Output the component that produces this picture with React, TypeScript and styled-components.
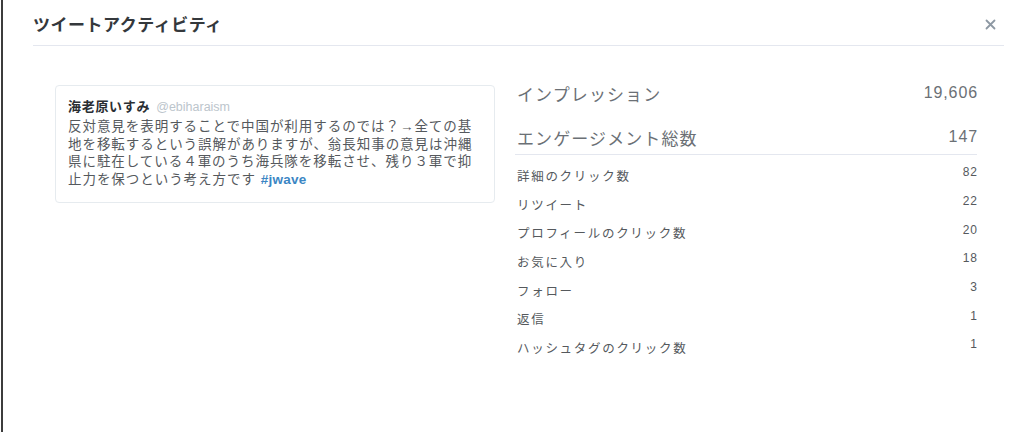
import React from "react";
import styled, { createGlobalStyle } from "styled-components";

const GlobalStyle = createGlobalStyle`
  html, body {
    margin: 0;
    padding: 0;
    background: #ffffff;
  }
  body {
    font-family: "Liberation Sans", "Noto Sans CJK JP", sans-serif;
    color: #292f33;
  }
`;

const Frame = styled.div`
  box-sizing: border-box;
  height: 432px;
  width: 1024px;
  margin-left: 1px;
  border-left: 2px solid #3c3c3c;
  overflow: hidden;
`;

const Header = styled.header`
  display: flex;
  align-items: center;
  justify-content: space-between;
  height: 45px;
  margin: 0 21px 0 30px;
  border-bottom: 1px solid #e4e7ef;
`;

const Title = styled.h2`
  margin: 0;
  padding-top: 7px;
  font-size: 17px;
  line-height: 22px;
  font-weight: 700;
  letter-spacing: 0.5px;
  color: #34383c;
`;

const CloseButton = styled.button`
  display: flex;
  align-items: center;
  justify-content: center;
  width: 20px;
  height: 20px;
  margin: 3px 4px 0 0;
  padding: 0;
  border: none;
  background: transparent;
  cursor: pointer;
`;

const Body = styled.div`
  display: flex;
  align-items: flex-start;
  padding: 39px 0 0 52px;
`;

const TweetCard = styled.article`
  box-sizing: border-box;
  width: 440px;
  padding: 12px 12px 13px 12px;
  border: 1px solid #e6ebef;
  border-radius: 4px;
`;

const AuthorLine = styled.div`
  display: flex;
  align-items: baseline;
  gap: 6px;
  line-height: 18px;
`;

const AuthorName = styled.span`
  font-size: 13px;
  font-weight: 700;
  letter-spacing: 0.7px;
  color: #2a2e33;
`;

const Handle = styled.span`
  font-size: 12.5px;
  color: #bcc5cc;
`;

const TweetText = styled.p`
  margin: 2px 0 0;
  font-size: 13.5px;
  line-height: 17.7px;
  letter-spacing: 0.95px;
  color: #55595d;
`;

const TweetLine = styled.span`
  display: flex;
  align-items: baseline;
  gap: 5px;
  white-space: nowrap;
`;

const Hashtag = styled.span`
  font-size: 13.5px;
  font-weight: 700;
  letter-spacing: 0.2px;
  color: #3b86c4;
`;

const Stats = styled.section`
  width: 462px;
  margin-left: 20px;
  margin-top: -5px;
`;

const Summary = styled.div`
  display: flex;
  flex-direction: column;
  gap: 18px;
  padding-bottom: 4px;
  border-bottom: 1px solid #e4e7ef;
`;

const BigRow = styled.div`
  display: flex;
  justify-content: space-between;
  align-items: center;
  height: 26px;
`;

const BigLabel = styled.span`
  padding-left: 2px;
  font-size: 17px;
  letter-spacing: 1.1px;
  color: #6b7075;
`;

const BigValue = styled.span`
  font-size: 16px;
  letter-spacing: 0.9px;
  margin-right: -1px;
  color: #6b7075;
`;

const DetailList = styled.ul`
  list-style: none;
  margin: 6px 0 0;
  padding: 0;
`;

const DetailRow = styled.li`
  display: flex;
  justify-content: space-between;
  align-items: center;
  height: 28.7px;
`;

const DetailLabel = styled.span`
  padding-left: 2px;
  font-size: 12.5px;
  letter-spacing: 1.7px;
  color: #55595d;
`;

const DetailValue = styled.span`
  padding-bottom: 6px;
  font-size: 12px;
  letter-spacing: 1px;
  margin-right: -1px;
  color: #55595d;
`;

const tweetLines: string[] = [
  "反対意見を表明することで中国が利用するのでは？→全ての基",
  "地を移転するという誤解がありますが、翁長知事の意見は沖縄",
  "県に駐在している４軍のうち海兵隊を移転させ、残り３軍で抑",
  "止力を保つという考え方です",
];

const details: { label: string; value: string }[] = [
  { label: "詳細のクリック数", value: "82" },
  { label: "リツイート", value: "22" },
  { label: "プロフィールのクリック数", value: "20" },
  { label: "お気に入り", value: "18" },
  { label: "フォロー", value: "3" },
  { label: "返信", value: "1" },
  { label: "ハッシュタグのクリック数", value: "1" },
];

export default function App() {
  return (
    <>
      <GlobalStyle />
      <Frame>
        <Header>
          <Title>ツイートアクティビティ</Title>
          <CloseButton aria-label="閉じる">
            <svg width="11" height="11" viewBox="0 0 11 11">
              <path
                d="M1.5 1.5 L9.5 9.5 M9.5 1.5 L1.5 9.5"
                stroke="#8d98a3"
                strokeWidth="1.8"
                strokeLinecap="round"
              />
            </svg>
          </CloseButton>
        </Header>
        <Body>
          <TweetCard>
            <AuthorLine>
              <AuthorName>海老原いすみ</AuthorName>
              <Handle>@ebiharaism</Handle>
            </AuthorLine>
            <TweetText>
              {tweetLines.map((line, i) => (
                <TweetLine key={i}>
                  <span>{line}</span>
                  {i === tweetLines.length - 1 && <Hashtag>#jwave</Hashtag>}
                </TweetLine>
              ))}
            </TweetText>
          </TweetCard>
          <Stats>
            <Summary>
              <BigRow>
                <BigLabel>インプレッション</BigLabel>
                <BigValue>19,606</BigValue>
              </BigRow>
              <BigRow>
                <BigLabel>エンゲージメント総数</BigLabel>
                <BigValue>147</BigValue>
              </BigRow>
            </Summary>
            <DetailList>
              {details.map((d) => (
                <DetailRow key={d.label}>
                  <DetailLabel>{d.label}</DetailLabel>
                  <DetailValue>{d.value}</DetailValue>
                </DetailRow>
              ))}
            </DetailList>
          </Stats>
        </Body>
      </Frame>
    </>
  );
}
